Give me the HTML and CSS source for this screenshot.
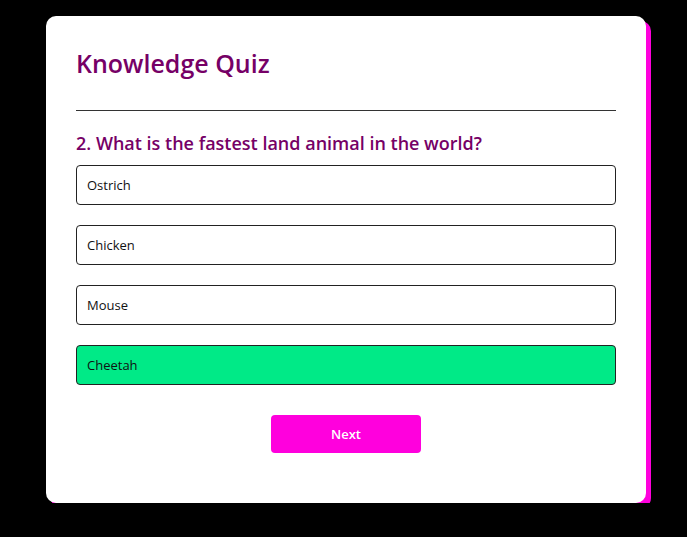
FILE: index.html
```html
<!DOCTYPE html>
<html>
<head>
<meta charset="utf-8">
<link rel="stylesheet" href="styles.css">
</head>
<body>
<div class="card">
  <h1 class="title">Knowledge Quiz</h1>
  <hr class="divider">
  <h2 class="question">2. What is the fastest land animal in the world?</h2>
  <div class="options">
    <div class="option">Ostrich</div>
    <div class="option">Chicken</div>
    <div class="option">Mouse</div>
    <div class="option correct">Cheetah</div>
  </div>
  <div class="actions">
    <button class="next">Next</button>
  </div>
</div>
</body>
</html>
```

FILE: styles.css
```css
html, body {
  margin: 0;
  padding: 0;
  background: #000;
}
body {
  font-family: "Open Sans", "Noto Sans", sans-serif;
  padding-top: 16px;
}
.card {
  box-sizing: border-box;
  width: 600px;
  margin-left: 46px;
  background: #fff;
  border-radius: 10px;
  box-shadow: 5px 5px 0 #ff00dd;
  padding: 28px 30px 49px;
  height: 487px;
}
.title {
  margin: 0;
  font-size: 25px;
  font-weight: 600;
  color: #760066;
  line-height: 38px;
}
.divider {
  border: 0;
  border-top: 1px solid #333;
  margin: 28px 0 0;
}
.question {
  margin: 20px 0 0;
  font-size: 18px;
  font-weight: 600;
  color: #760066;
  line-height: 25px;
}
.options {
  margin-top: 9px;
  display: flex;
  flex-direction: column;
  gap: 20px;
}
.option {
  box-sizing: border-box;
  height: 40px;
  border: 1px solid #222;
  border-radius: 4px;
  padding: 0 10px;
  display: flex;
  align-items: center;
  font-size: 13px;
  color: #111;
}
.option.correct {
  background: #00ea87;
}
.actions {
  display: flex;
  justify-content: center;
  margin-top: 30px;
}
.next {
  width: 150px;
  height: 38px;
  border: 0;
  border-radius: 4px;
  background: #ff00dd;
  color: #fff;
  font-family: "Open Sans", sans-serif;
  font-weight: 600;
  font-size: 13px;
}
```
